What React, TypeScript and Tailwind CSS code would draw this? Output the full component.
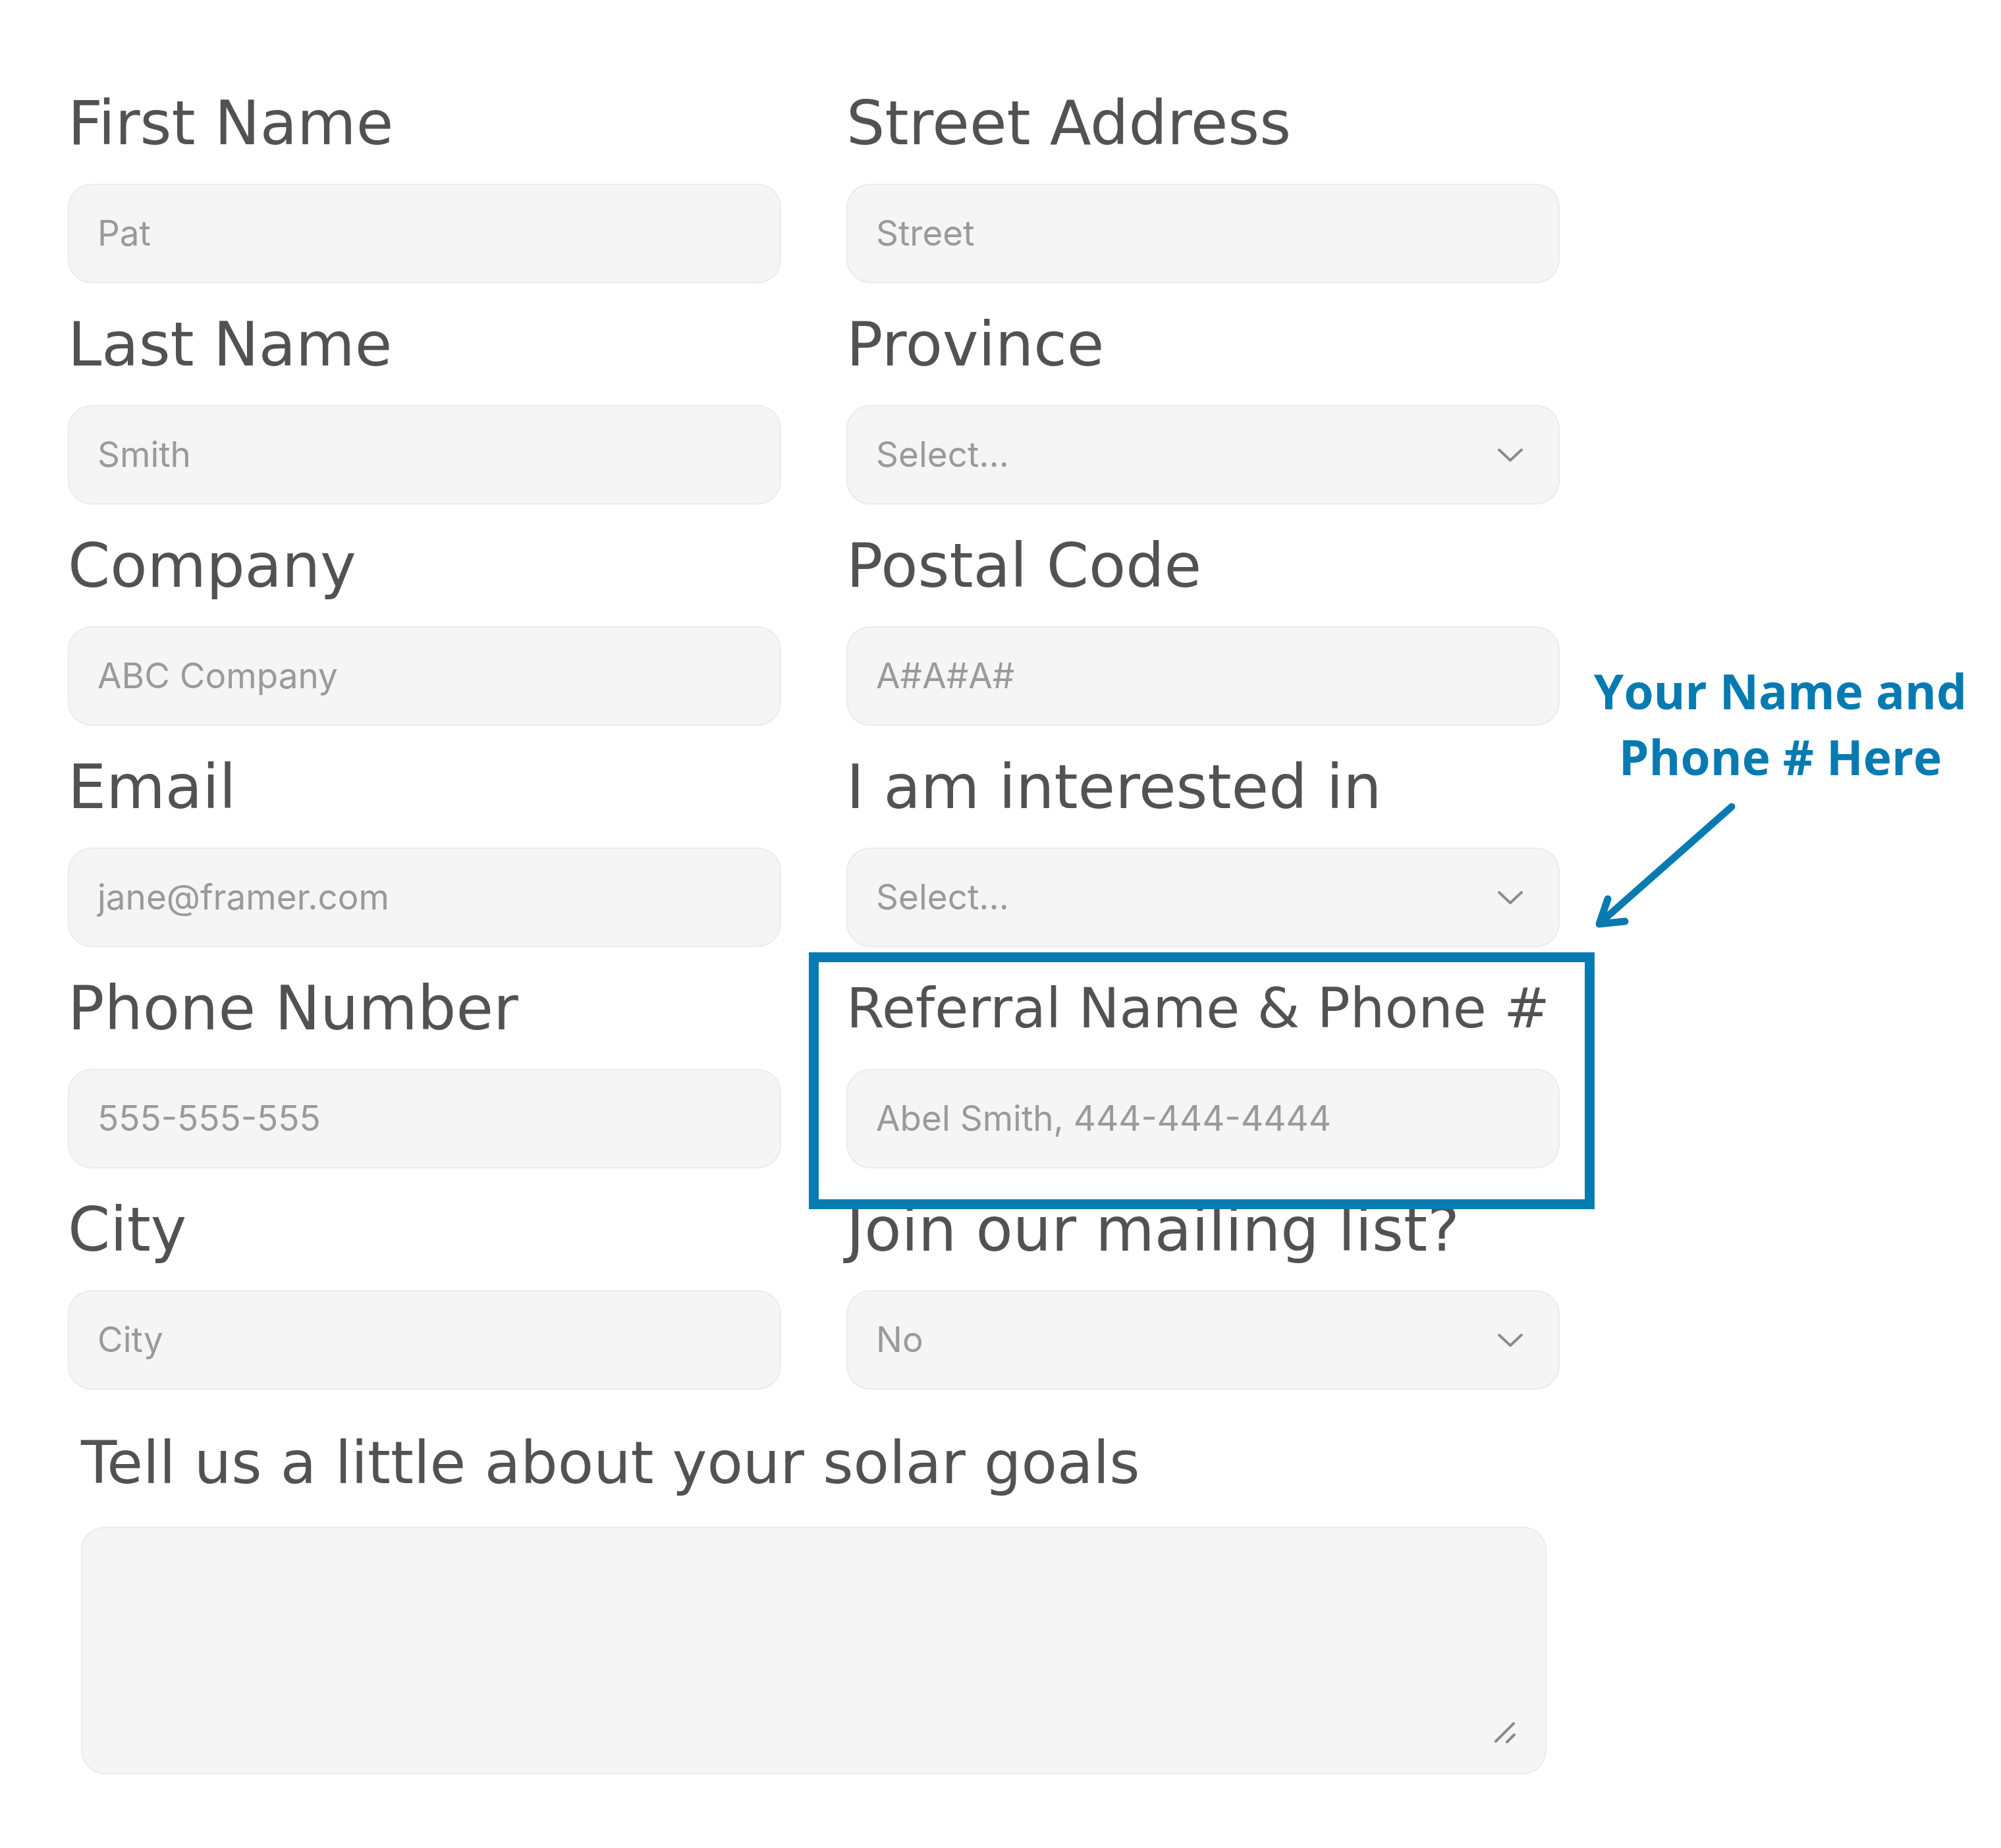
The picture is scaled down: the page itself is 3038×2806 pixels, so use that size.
import React from 'react';

type Field = {
  label: string;
  placeholder: string;
  select?: boolean;
  small?: boolean;
};

// rows of the form, left column then right column
const rows: [Field, Field][] = [
  [{ label: 'First Name', placeholder: 'Pat' }, { label: 'Street Address', placeholder: 'Street' }],
  [{ label: 'Last Name', placeholder: 'Smith' }, { label: 'Province', placeholder: 'Select...', select: true }],
  [{ label: 'Company', placeholder: 'ABC Company' }, { label: 'Postal Code', placeholder: 'A#A#A#' }],
  [{ label: 'Email', placeholder: 'jane@framer.com' }, { label: 'I am interested in', placeholder: 'Select...', select: true }],
  [
    { label: 'Phone Number', placeholder: '555-555-555' },
    { label: 'Referral Name & Phone #', placeholder: 'Abel Smith, 444-444-4444', small: true },
  ],
  [{ label: 'City', placeholder: 'City' }, { label: 'Join our mailing list?', placeholder: 'No', select: true }],
];

const labelFont = { fontFamily: '"DejaVu Sans", sans-serif' };
const inputFont = { fontFamily: 'Inter, "Liberation Sans", sans-serif' };

function Chevron() {
  return (
    <svg width="40" height="22" viewBox="0 0 40 22" fill="none">
      <polyline points="3,3 20,19 37,3" stroke="#8c8c8c" strokeWidth="4" strokeLinecap="round" strokeLinejoin="round" />
    </svg>
  );
}

function FormField({ field }: { field: Field }) {
  return (
    <div className="flex flex-col">
      <div
        className={`h-[110px] mb-[36px] leading-[110px] text-[#525252] whitespace-nowrap ${
          field.small ? 'text-[83px]' : 'text-[92px]'
        }`}
        style={labelFont}
      >
        {field.label}
      </div>
      <div
        className="h-[151px] rounded-[36px] bg-[#f5f5f5] border-2 border-[#ebebeb] flex items-center justify-between pl-[43px] pr-[53px] text-[53px] text-[#9a9a9a]"
        style={inputFont}
      >
        <span>{field.placeholder}</span>
        {field.select && <Chevron />}
      </div>
    </div>
  );
}

export default function App() {
  return (
    <div className="w-[3038px] h-[2806px] bg-white flex overflow-hidden">
      {/* Form */}
      <div className="relative w-[2368px] pl-[103px] pt-[133px] flex flex-col">
        <div className="grid grid-cols-2 gap-x-[99px] gap-y-[39px]">
          {rows.map(([left, right]) => (
            <React.Fragment key={left.label}>
              <FormField field={left} />
              <FormField field={right} />
            </React.Fragment>
          ))}
        </div>

        <div className="mt-[56px] px-[20px] flex flex-col">
          <div className="h-[110px] mb-[42px] text-[89px] leading-[110px] text-[#525252] whitespace-nowrap" style={labelFont}>
            Tell us a little about your solar goals
          </div>
          <div className="h-[376px] rounded-[36px] bg-[#f5f5f5] border-2 border-[#ebebeb] flex items-end justify-end pr-[44px] pb-[44px]">
            <svg width="34" height="34" viewBox="0 0 34 34" fill="none">
              <line x1="3" y1="30" x2="30" y2="3" stroke="#8a8a8a" strokeWidth="4" strokeLinecap="round" />
              <line x1="20" y1="31" x2="31" y2="20" stroke="#8a8a8a" strokeWidth="4" strokeLinecap="round" />
            </svg>
          </div>
        </div>

        {/* highlight box over referral field */}
        <div className="absolute left-[1228px] top-[1446px] w-[1193px] h-[390px] border-[15px] border-[#077bb1]" />
      </div>

      {/* Annotation */}
      <div className="flex-1 flex flex-col pt-[999px]">
        <div
          className="text-center text-[73px] leading-[100px] font-bold text-[#077bb1]"
          style={{ fontFamily: '"Open Sans", sans-serif' }}
        >
          <div>Your Name and</div>
          <div>Phone # Here</div>
        </div>
        <svg className="ml-[42px]" width="240" height="220" viewBox="0 0 240 220" fill="none">
          <line x1="219" y1="26" x2="22" y2="200" stroke="#077bb1" strokeWidth="11" strokeLinecap="round" />
          <polyline points="31,166 18,204 57,200" stroke="#077bb1" strokeWidth="11" strokeLinecap="round" strokeLinejoin="round" />
        </svg>
      </div>
    </div>
  );
}
